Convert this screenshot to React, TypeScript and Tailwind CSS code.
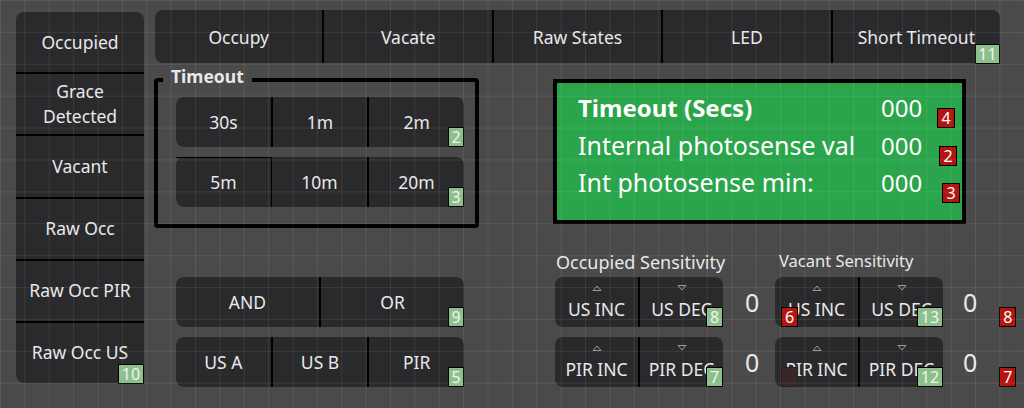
import React from "react";

function Badge({ n, red, className }: { n: string; red?: boolean; className: string }) {
  return (
    <span
      className={`absolute z-[5] flex items-center justify-center h-[20px] border border-black text-[16px] leading-none ${
        red ? "bg-[#b3140e] text-white" : "bg-[#8cbf8c] text-[#eef5ee]"
      } ${className}`}
    >
      {n}
    </span>
  );
}

function Sep() {
  return <div className="w-[2px] self-stretch bg-black" />;
}

function UpTri() {
  return (
    <svg width="10" height="6" viewBox="0 0 10 6" className="block">
      <path d="M1 5.5 L5 1 L9 5.5 Z" fill="none" stroke="#9a9a9a" strokeWidth="1" />
    </svg>
  );
}
function DownTri() {
  return (
    <svg width="10" height="6" viewBox="0 0 10 6" className="block">
      <path d="M1 0.5 L9 0.5 L5 5 Z" fill="none" stroke="#9a9a9a" strokeWidth="1" />
    </svg>
  );
}

function SensCell({ up, label }: { up: boolean; label: string }) {
  return (
    <div className="flex-1 flex flex-col items-center pt-[8px] overflow-hidden">
      {up ? <UpTri /> : <DownTri />}
      <span className="mt-[7px] leading-[22px] whitespace-nowrap">{label}</span>
    </div>
  );
}

function SensRow({
  a,
  b,
  badge,
  badgeW,
  children,
}: {
  a: string;
  b: string;
  badge: string;
  badgeW: string;
  children?: React.ReactNode;
}) {
  return (
    <div className="relative shrink-0 flex w-[168px] h-[50px] rounded-lg bg-[#2a2a2d]">
      <SensCell up label={a} />
      <Sep />
      <SensCell up={false} label={b} />
      <Badge n={badge} className={`right-0 bottom-0 ${badgeW}`} />
      {children}
    </div>
  );
}

export default function App() {
  const leftItems = ["Occupied", "Grace\nDetected", "Vacant", "Raw Occ", "Raw Occ PIR", "Raw Occ US"];
  const topItems = ["Occupy", "Vacate", "Raw States", "LED", "Short Timeout"];

  return (
    <div className="relative w-[1024px] h-[408px] overflow-hidden bg-[#4a4a4a] text-[#e8e8e8] font-[family-name:'Noto_Sans',sans-serif] text-[17.5px] flex items-start pl-[16px] pt-[10px]">
      {/* Left column */}
      <div className="relative shrink-0 mt-[2px] w-[128px] h-[371px] rounded-lg bg-[#2a2a2d] flex flex-col">
        {leftItems.map((t, i) => (
          <React.Fragment key={t}>
            {i > 0 && <div className="h-[2px] bg-black" />}
            <div className="flex-1 flex items-center justify-center text-center leading-[25px] whitespace-pre-line">
              {t}
            </div>
          </React.Fragment>
        ))}
        <Badge n="10" className="right-0 bottom-[-1px] w-[26px]" />
      </div>

      {/* Right area */}
      <div className="ml-[11px] w-[845px] shrink-0 flex flex-col">
        {/* Top bar */}
        <div className="relative flex h-[53px] rounded-lg bg-[#2a2a2d]">
          {topItems.map((t, i) => (
            <React.Fragment key={t}>
              {i > 0 && <Sep />}
              <div className="flex-1 flex items-center justify-center pt-[2px]">{t}</div>
            </React.Fragment>
          ))}
          <Badge n="11" className="right-0 bottom-[-1px] w-[25px]" />
        </div>

        <div className="flex items-start">
          {/* Column A */}
          <div className="-ml-[1px] w-[399px] shrink-0 flex flex-col">
            <div className="relative mt-[15px] w-[325px] h-[150px] border-4 border-black rounded-[4px] pt-[15px] pl-[18px]">
              <span className="absolute left-[5px] top-[-17px] px-[8px] leading-[22px] font-bold bg-[#4a4a4a]">
                Timeout
              </span>
              <div className="relative flex w-[288px] h-[50px] rounded-lg bg-[#2a2a2d]">
                <div className="flex-1 flex items-center justify-center">30s</div>
                <Sep />
                <div className="flex-1 flex items-center justify-center">1m</div>
                <Sep />
                <div className="flex-1 flex items-center justify-center">2m</div>
                <Badge n="2" className="right-0 bottom-0 w-[16px]" />
              </div>
              <div className="relative flex w-[288px] h-[50px] mt-[10px] rounded-lg bg-[#2a2a2d]">
                <div className="flex-1 flex items-center justify-center border-t border-black rounded-bl-lg rounded-br-[6px]">
                  5m
                </div>
                <div className="w-[1px] self-stretch bg-black" />
                <div className="flex-1 flex items-center justify-center">10m</div>
                <Sep />
                <div className="flex-1 flex items-center justify-center">20m</div>
                <Badge n="3" className="right-0 bottom-0 w-[16px]" />
              </div>
            </div>

            <div className="ml-[22px] mt-[49px] flex flex-col gap-[10px]">
              <div className="relative flex w-[288px] h-[50px] rounded-lg bg-[#2a2a2d]">
                <div className="flex-1 flex items-center justify-center">AND</div>
                <Sep />
                <div className="flex-1 flex items-center justify-center">OR</div>
                <Badge n="9" className="right-0 bottom-0 w-[16px]" />
              </div>
              <div className="relative flex w-[288px] h-[50px] rounded-lg bg-[#2a2a2d]">
                <div className="flex-1 flex items-center justify-center">US A</div>
                <Sep />
                <div className="flex-1 flex items-center justify-center">US B</div>
                <Sep />
                <div className="flex-1 flex items-center justify-center">PIR</div>
                <Badge n="5" className="right-0 bottom-0 w-[16px]" />
              </div>
            </div>
          </div>

          {/* Column B */}
          <div className="shrink-0 flex flex-col">
            <div className="mt-[16px] w-[413px] h-[145px] border-4 border-black bg-[#2ba54b] pl-[21px] pt-[6px] text-[25px] text-white">
              <div className="flex items-start h-[38px]">
                <span className="w-[303px] text-[24px] font-bold leading-[38px]">Timeout (Secs)</span>
                <span className="text-[24px] leading-[38px]">000</span>
                <span className="ml-[15px] mt-[19px] w-[18px] h-[20px] bg-[#b3140e] border border-black text-[16px] leading-none flex items-center justify-center">
                  4
                </span>
              </div>
              <div className="flex items-start h-[37px]">
                <span className="w-[303px] leading-[37px] whitespace-nowrap">Internal photosense val</span>
                <span className="text-[24px] leading-[37px]">000</span>
                <span className="ml-[17px] mt-[19px] w-[18px] h-[20px] bg-[#b3140e] border border-black text-[16px] leading-none flex items-center justify-center">
                  2
                </span>
              </div>
              <div className="flex items-start h-[37px]">
                <span className="w-[303px] leading-[37px] whitespace-nowrap">Int photosense min:</span>
                <span className="text-[24px] leading-[37px]">000</span>
                <span className="ml-[20px] mt-[19px] w-[18px] h-[20px] bg-[#b3140e] border border-black text-[16px] leading-none flex items-center justify-center">
                  3
                </span>
              </div>
            </div>

            <div className="flex items-start mt-[26px]">
              {/* Occupied sensitivity */}
              <div className="ml-[2px] w-[220px] shrink-0 flex flex-col">
                <span className="pl-[1px] text-[18px] leading-[24px] whitespace-nowrap">Occupied Sensitivity</span>
                <div className="mt-[3px] flex flex-col gap-[10px]">
                  <div className="flex items-center">
                    <SensRow a="US INC" b="US DEC" badge="8" badgeW="w-[17px]" />
                    <span className="ml-[22px] text-[25px] leading-none">0</span>
                  </div>
                  <div className="flex items-center">
                    <SensRow a="PIR INC" b="PIR DEC" badge="7" badgeW="w-[17px]" />
                    <span className="ml-[22px] text-[25px] leading-none">0</span>
                  </div>
                </div>
              </div>

              {/* Vacant sensitivity */}
              <div className="shrink-0 flex flex-col">
                <span className="pl-[4px] text-[16.5px] leading-[22px] whitespace-nowrap">Vacant Sensitivity</span>
                <div className="mt-[5px] flex flex-col gap-[10px]">
                  <div className="flex items-center">
                    <SensRow a="US INC" b="US DEC" badge="13" badgeW="w-[26px]">
                      <Badge n="6" red className="left-[6px] bottom-0 w-[17px]" />
                    </SensRow>
                    <span className="ml-[20px] text-[25px] leading-none">0</span>
                    <span className="ml-[22px] self-end w-[17px] h-[20px] bg-[#b3140e] border border-black text-white text-[16px] leading-none flex items-center justify-center">
                      8
                    </span>
                  </div>
                  <div className="flex items-center">
                    <SensRow a="PIR INC" b="PIR DEC" badge="12" badgeW="w-[26px]">
                      <span className="absolute left-[6px] bottom-0 w-[17px] h-[20px] bg-[#3a2627] border border-[#222]" />
                    </SensRow>
                    <span className="ml-[20px] text-[25px] leading-none">0</span>
                    <span className="ml-[22px] self-end w-[17px] h-[20px] bg-[#b3140e] border border-black text-white text-[16px] leading-none flex items-center justify-center">
                      7
                    </span>
                  </div>
                </div>
              </div>
            </div>
          </div>
        </div>
      </div>

      {/* Grid overlay */}
      <div className="pointer-events-none absolute inset-0 z-10 bg-[linear-gradient(to_right,rgba(255,255,255,0.08)_1px,transparent_1px),linear-gradient(to_bottom,rgba(255,255,255,0.08)_1px,transparent_1px)] bg-[size:24.38px_31.9px]" />
    </div>
  );
}
